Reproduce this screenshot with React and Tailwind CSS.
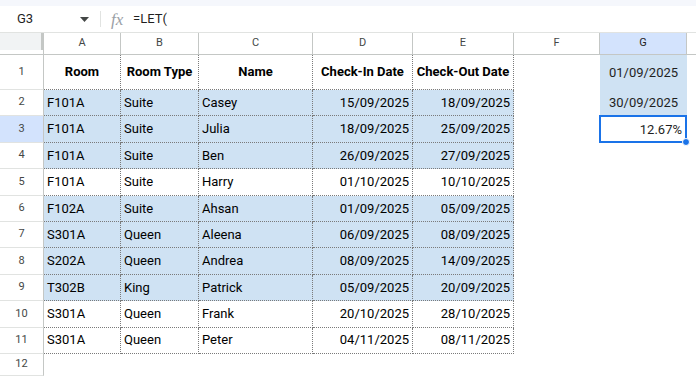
import React from 'react';

const rows = [
  { n: 2, fill: true, v: ['F101A', 'Suite', 'Casey', '15/09/2025', '18/09/2025'], g: '30/09/2025' },
  { n: 3, fill: true, v: ['F101A', 'Suite', 'Julia', '18/09/2025', '25/09/2025'], g: '12.67%' },
  { n: 4, fill: true, v: ['F101A', 'Suite', 'Ben', '26/09/2025', '27/09/2025'] },
  { n: 5, fill: false, v: ['F101A', 'Suite', 'Harry', '01/10/2025', '10/10/2025'] },
  { n: 6, fill: true, v: ['F102A', 'Suite', 'Ahsan', '01/09/2025', '05/09/2025'] },
  { n: 7, fill: true, v: ['S301A', 'Queen', 'Aleena', '06/09/2025', '08/09/2025'] },
  { n: 8, fill: true, v: ['S202A', 'Queen', 'Andrea', '08/09/2025', '14/09/2025'] },
  { n: 9, fill: true, v: ['T302B', 'King', 'Patrick', '05/09/2025', '20/09/2025'] },
  { n: 10, fill: false, v: ['S301A', 'Queen', 'Frank', '20/10/2025', '28/10/2025'] },
  { n: 11, fill: false, v: ['S301A', 'Queen', 'Peter', '04/11/2025', '08/11/2025'] },
];

const widths = ['w-[77px]', 'w-[78px]', 'w-[114px]', 'w-[100px]', 'w-[101px]'];
const headers = ['Room', 'Room Type', 'Name', 'Check-In Date', 'Check-Out Date'];

const RowNum = ({ n, active }) => (
  <div
    className={`w-[44px] shrink-0 flex items-center justify-center border-r border-b border-r-[#c4c7c5] border-b-[#e1e3e1] text-[11px] text-[#444746] ${
      active ? 'bg-[#d3e3fd]' : 'bg-white'
    }`}
  >
    {n}
  </div>
);

const App = () => {
  return (
    <div className="w-[696px] h-[376px] overflow-hidden bg-white font-[Roboto,sans-serif] text-[13px] text-[#1f1f1f]">
      {/* top strip */}
      <div className="h-[6px] bg-[#f5f7fc]" />

      {/* Formula bar */}
      <div className="h-[27px] flex items-center border-b border-[#e1e3e1]">
        <div className="w-[100px] flex items-center justify-between pl-[17px] pr-[11px]">
          <span>G3</span>
          <svg width="9" height="5" viewBox="0 0 9 5">
            <path d="M0 0h9L4.5 5z" fill="#444746" />
          </svg>
        </div>
        <div className="w-px h-[16px] bg-[#e1e3e1]" />
        <span className="ml-[10px] w-[20px] text-[17px] leading-none italic text-[#9aa0a6] font-['Liberation_Serif',serif]">fx</span>
        <span className="ml-[2px]">=LET(</span>
      </div>

      {/* Column headers */}
      <div className="h-[22px] flex border-b border-[#c4c7c5] text-[11px] text-[#444746]">
        <div className="w-[44px] shrink-0 flex flex-col">
          <div className="h-[17px] flex">
            <div className="flex-1 bg-[#f1f3f4]" />
            <div className="w-[3px] bg-[#c4c7c5]" />
          </div>
          <div className="flex-1 border-r border-[#c4c7c5]" />
        </div>
        {['A', 'B', 'C', 'D', 'E'].map((c, i) => (
          <div key={c} className={`${widths[i]} shrink-0 flex items-center justify-center border-r border-[#c4c7c5]`}>
            {c}
          </div>
        ))}
        <div className="w-[86px] shrink-0 flex items-center justify-center border-r border-[#c4c7c5]">F</div>
        <div className="w-[87px] shrink-0 flex items-center justify-center border-r border-[#c4c7c5] bg-[#d3e3fd] text-[#1f1f1f]">
          G
        </div>
        <div className="flex-1" />
      </div>

      {/* Row 1 */}
      <div className="h-[35px] flex">
        <RowNum n={1} />
        {headers.map((h, i) => (
          <div
            key={h}
            className={`${widths[i]} shrink-0 flex items-center justify-center font-bold border-r border-b border-dotted border-[#7a7a7a] text-black`}
          >
            {h}
          </div>
        ))}
        <div className="w-[86px] shrink-0" />
        <div className="w-[87px] shrink-0 flex items-center justify-center bg-[#cfe2f3]">01/09/2025</div>
        <div className="flex-1" />
      </div>

      {/* Data rows */}
      {rows.map((r) => (
        <div key={r.n} className="h-[26.4px] flex">
          <RowNum n={r.n} active={r.n === 3} />
          {r.v.map((val, i) => (
            <div
              key={i}
              className={`${widths[i]} shrink-0 flex items-center px-[3px] border-r border-b border-dotted border-[#7a7a7a] text-black ${
                i > 2 ? 'justify-end' : 'justify-start'
              } ${r.fill ? 'bg-[#cfe2f3]' : 'bg-white'}`}
            >
              {val}
            </div>
          ))}
          <div className="w-[86px] shrink-0" />
          {r.n === 2 && (
            <div className="w-[87px] shrink-0 flex items-center justify-center bg-[#cfe2f3]">{r.g}</div>
          )}
          {r.n === 3 && (
            <div className="relative w-[88px] shrink-0 flex items-center justify-end pr-[3px] border-2 border-[#1a73e8] -ml-px -mt-px h-[28px]">
              {r.g}
              <div className="absolute -right-[5px] -bottom-[5px] w-[8px] h-[8px] rounded-full bg-[#1a73e8] border border-white" />
            </div>
          )}
          {r.n > 3 && <div className="w-[87px] shrink-0" />}
          <div className="flex-1" />
        </div>
      ))}

      {/* Row 12 */}
      <div className="h-[22px] flex">
        <RowNum n={12} />
        <div className="flex-1" />
      </div>
    </div>
  );
};

export default App;
